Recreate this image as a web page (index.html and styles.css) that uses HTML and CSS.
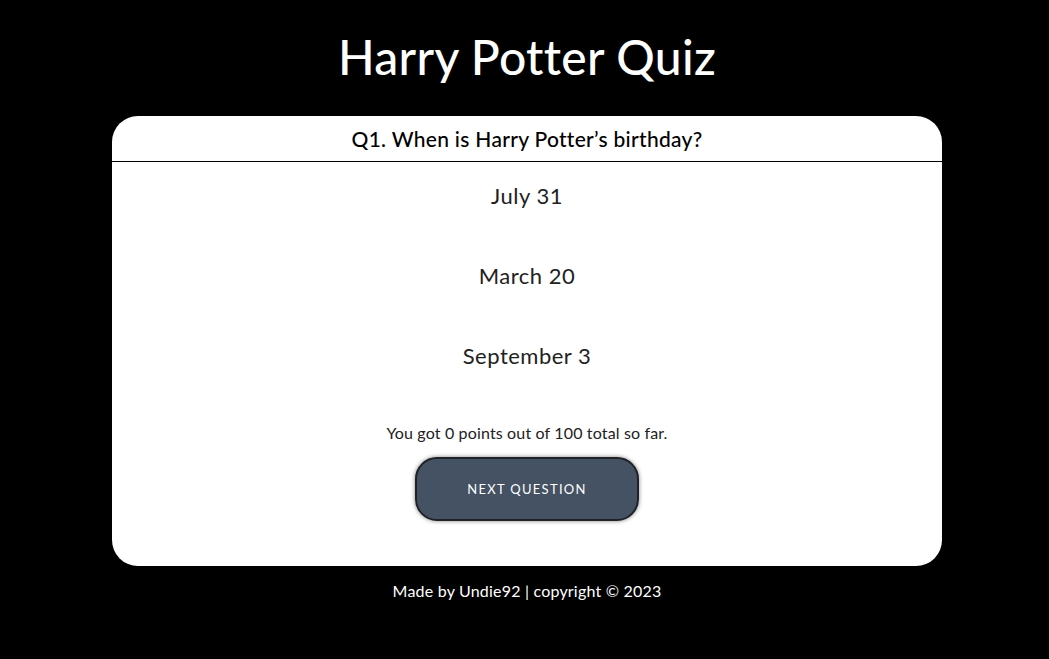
FILE: index.html
```html
<!DOCTYPE html>
<html>
<head>
<meta charset="utf-8">
<link rel="stylesheet" href="styles.css">
</head>
<body>
<main class="page">
  <h1 class="title">Harry Potter Quiz</h1>
  <section class="card">
    <header class="question">Q1. When is Harry Potter’s birthday?</header>
    <ul class="answers">
      <li class="answer">July 31</li>
      <li class="answer">March 20</li>
      <li class="answer">September 3</li>
    </ul>
    <p class="score">You got 0 points out of 100 total so far.</p>
    <button class="next">NEXT QUESTION</button>
  </section>
  <footer class="footer">Made by Undie92 | copyright © 2023</footer>
</main>
</body>
</html>
```

FILE: styles.css
```css
html, body {
  margin: 0;
  padding: 0;
  background: #000;
}
body {
  font-family: Lato, "Open Sans", sans-serif;
  color: #000;
}
.page {
  display: flex;
  flex-direction: column;
  align-items: center;
  padding-left: 5px;
}
.title {
  margin: 0;
  height: 116px;
  box-sizing: border-box;
  padding-top: 27px;
  font-size: 48px;
  line-height: 60px;
  font-weight: 500;
  letter-spacing: 0.3px;
  color: #fff;
}
.card {
  width: 830px;
  height: 450px;
  box-sizing: border-box;
  background: #fff;
  border-radius: 26px;
  display: flex;
  flex-direction: column;
  align-items: center;
}
.question {
  align-self: stretch;
  height: 45px;
  border-bottom: 1px solid #000;
  display: flex;
  align-items: center;
  justify-content: center;
  font-size: 21px;
  font-weight: 500;
  letter-spacing: 0.3px;
}
.answers {
  list-style: none;
  margin: 0;
  padding: 19px 0 0;
  display: flex;
  flex-direction: column;
  gap: 50px;
  align-items: center;
}
.answer {
  height: 30px;
  line-height: 30px;
  font-size: 22px;
  font-weight: 400;
  letter-spacing: 0.5px;
  color: #222;
}
.score {
  margin: 52px 0 0;
  height: 20px;
  line-height: 20px;
  font-size: 16px;
  letter-spacing: 0.15px;
  color: #222;
}
.next {
  margin-top: 14px;
  width: 224px;
  height: 64px;
  border: 2px solid #1f2328;
  border-radius: 22px;
  background: #445263;
  color: #fff;
  font-family: Lato, "Open Sans", sans-serif;
  font-size: 13px;
  letter-spacing: 1.3px;
  box-shadow: 0 0 4px rgba(0,0,0,0.5);
  cursor: pointer;
}
.footer {
  height: 50px;
  line-height: 50px;
  color: #fff;
  font-size: 16px;
  letter-spacing: 0.2px;
}
```
